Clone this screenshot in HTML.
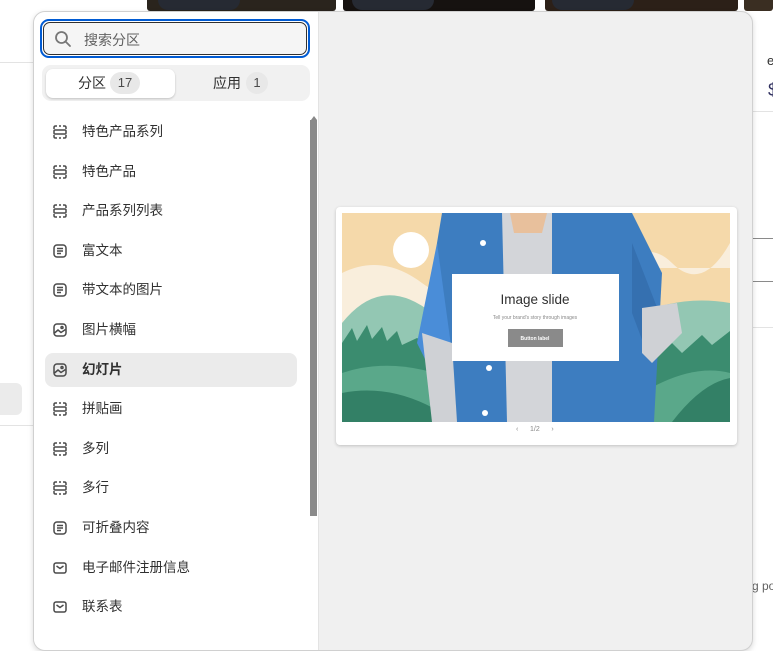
<!DOCTYPE html>
<html><head><meta charset="utf-8"><style>
*{box-sizing:border-box;margin:0;padding:0}
body{width:773px;height:630px;overflow:hidden;background:#fff;position:relative;font-family:"Liberation Sans","Noto Sans CJK SC",sans-serif;color:#303030}
.abs{position:absolute}
.tile{position:absolute;top:0;height:11px;background:#2a241d;border-radius:0 0 3px 3px}
.pill{position:absolute;top:0;height:10px;background:#262a33;border-radius:0 0 12px 12px}
.pop{position:absolute;left:33px;top:11px;width:720px;height:640px;background:#f0f0f0;border:1px solid #d0d0d0;border-radius:12px;overflow:hidden;box-shadow:0 2px 6px rgba(0,0,0,.15)}
.left{position:absolute;left:0;top:0;width:285px;height:100%;background:#fff;border-right:1px solid #e3e3e3}
.search{position:absolute;left:6px;top:7px;width:270px;height:39px;border:2px solid #005bd3;border-radius:9px;}
.search .in{position:absolute;inset:1px;border:1.5px solid #303030;border-radius:7px;background:#f5f5f5}
.search span{position:absolute;left:42px;top:9px;font-size:14px;color:#616161}
.tabs{position:absolute;left:8px;top:53px;width:268px;height:36px;background:#f1f1f1;border-radius:9px}
.tab1{position:absolute;left:4px;top:4px;width:129px;height:29px;background:#fff;border-radius:7px;box-shadow:0 1px 2px rgba(0,0,0,.2)}
.tl{position:absolute;top:8px;font-size:14px;color:#303030}
.badge{position:absolute;top:7px;height:22px;background:#e8e8e8;border-radius:11px;font-size:13px;color:#4a4a4a;text-align:center;line-height:22px}
.item{position:absolute;left:11px;width:252px;height:34px;border-radius:8px}
.item svg{position:absolute;left:8px;top:10px}
.item span{position:absolute;left:37px;top:5px;font-size:13.5px;color:#303030}
.sel{background:#ebebeb}
.sel span{font-weight:bold}
.sb{position:absolute;left:276px;top:108px;width:7px;height:396px;background:#8a8a8a}
.card{position:absolute;left:302px;top:195px;width:401px;height:238px;background:#fff;border-radius:4px;box-shadow:0 1px 3px rgba(0,0,0,.2)}
</style></head><body>
<div class="tile" style="left:147px;width:189px"></div><div class="pill" style="left:158px;width:82px"></div>
<div class="tile" style="left:343px;width:192px;background:#161210"></div><div class="pill" style="left:352px;width:82px"></div>
<div class="tile" style="left:545px;width:193px;background:#2c2018"></div><div class="pill" style="left:552px;width:82px"></div>
<div class="tile" style="left:744px;width:29px;background:#3a2e22"></div>
<div class="abs" style="left:0;top:62px;width:34px;height:1px;background:#e3e3e3"></div>
<div class="abs" style="left:0;top:383px;width:22px;height:32px;background:#ebebeb;border-radius:0 6px 6px 0"></div>
<div class="abs" style="left:0;top:425px;width:34px;height:1px;background:#e3e3e3"></div>
<div class="abs" style="left:767px;top:53px;font-size:13px">e</div>
<div class="abs" style="left:768px;top:80px;font-size:18px;color:#303060">$</div>
<div class="abs" style="left:753px;top:111px;width:20px;height:1px;background:#e3e3e3"></div>
<div class="abs" style="left:753px;top:238px;width:20px;height:1px;background:#8a8a8a"></div>
<div class="abs" style="left:753px;top:281px;width:20px;height:1px;background:#8a8a8a"></div>
<div class="abs" style="left:753px;top:327px;width:20px;height:1px;background:#e3e3e3"></div>
<div class="abs" style="left:752px;top:579px;font-size:12px;color:#616161;white-space:nowrap">g po</div>

<div class="pop">
<div class="left">
 <div class="search"><div class="in"></div>
  <svg class="abs" style="left:12px;top:9px" width="18" height="18" viewBox="0 0 18 18"><circle cx="7.5" cy="7.5" r="5.5" fill="none" stroke="#777" stroke-width="1.8"/><path d="M11.5 11.5L16 16" stroke="#777" stroke-width="1.8" stroke-linecap="round"/></svg>
  <span>搜索分区</span></div>
 <div class="tabs"><div class="tab1"></div>
  <span class="tl" style="left:36px">分区</span><div class="badge" style="left:68px;width:30px">17</div>
  <span class="tl" style="left:171px">应用</span><div class="badge" style="left:204px;width:22px">1</div>
 </div>
 <div class="sb"></div>
 <div class="abs" style="left:276px;top:104px;width:0;height:0;border-left:3px solid transparent;border-right:3px solid transparent;border-bottom:4px solid #888;margin-left:1px"></div>
 <div id="list"></div>
</div>
<div class="card">
 <svg class="abs" style="left:6px;top:6px" width="388" height="209" viewBox="0 0 388 209">
  <rect width="388" height="209" fill="#f5d9aa"/>
  <path d="M0 60 Q40 40 80 70 T160 60 L160 110 L0 110Z" fill="#f9eedc"/>
  <path d="M260 70 Q300 20 330 50 T388 30 L388 55 L260 55Z" fill="#f9eedc"/>
  <circle cx="69" cy="37" r="18" fill="#fff"/>
  <path d="M0 110 Q40 60 90 100 L140 140 L140 209 L0 209Z" fill="#93c7b3"/>
  <path d="M0 130 L10 115 L15 128 L25 112 L30 126 L40 114 L45 128 L55 118 L60 132 L75 125 L120 150 L120 209 L0 209Z" fill="#3b8c6f"/>
  <path d="M0 160 Q60 140 130 175 L130 209 L0 209Z" fill="#5aa88a"/>
  <path d="M0 180 Q50 170 100 200 L100 209 L0 209Z" fill="#338066"/>
  <path d="M280 110 Q330 80 388 90 L388 209 L280 209Z" fill="#93c7b3"/>
  <path d="M290 150 L300 140 L310 148 L330 130 L340 140 L360 122 L370 132 L388 118 L388 209 L290 209Z" fill="#3b8c6f"/>
  <path d="M300 180 Q350 150 388 160 L388 209 L300 209Z" fill="#5aa88a"/>
  <path d="M330 209 Q360 170 388 165 L388 209Z" fill="#338066"/>
  <path d="M100 0 L290 0 L320 60 L312 209 L110 209 L100 120 L95 30Z" fill="#3d7dc0"/>
  <path d="M95 30 L75 130 L90 160 L110 140Z" fill="#4a8dd8"/>
  <path d="M290 30 L325 120 L305 140 L290 100Z" fill="#3570b0"/>
  <path d="M160 0 L210 0 L210 209 L165 209Z" fill="#d3d5d9"/>
  <path d="M168 0 L205 0 L200 20 L172 20Z" fill="#e8c09c"/>
  <path d="M80 120 L110 130 L115 209 L90 209 Z" fill="#cfd1d5"/>
  <path d="M300 95 L335 90 L340 120 L310 150 L300 140Z" fill="#cfd1d5"/>
  <circle cx="141" cy="30" r="3" fill="#fff"/><circle cx="143" cy="200" r="3" fill="#fff"/><circle cx="147" cy="155" r="3" fill="#fff"/>
  <rect x="110" y="61" width="167" height="87" fill="#fff"/>
  <text x="193" y="91" text-anchor="middle" font-size="13.5" fill="#303030" font-family="Liberation Sans,sans-serif">Image slide</text>
  <text x="193" y="106" text-anchor="middle" font-size="5" fill="#888" font-family="Liberation Sans,sans-serif">Tell your brand's story through images</text>
  <rect x="166" y="116" width="55" height="18" fill="#8a8a8a"/>
  <text x="193" y="127" text-anchor="middle" font-size="5" fill="#fff" font-weight="bold" font-family="Liberation Sans,sans-serif">Button label</text>
 </svg>
 <div class="abs" style="left:180px;top:219px;font-size:7px;color:#888">‹&nbsp;&nbsp;&nbsp;&nbsp;&nbsp;&nbsp;1/2&nbsp;&nbsp;&nbsp;&nbsp;&nbsp;&nbsp;›</div>
</div>
</div>
<script>
var dash='<svg width="14" height="14" viewBox="0 0 14 14" fill="none" stroke="#4a4a4a" stroke-width="1.5"><path d="M1 4V2.5Q1 1 2.5 1H4M6 1h2M10 1h1.5Q13 1 13 2.5V4M1 10v1.5Q1 13 2.5 13H4M6 13h2M10 13h1.5Q13 13 13 11.5V10"/><rect x="1" y="5" width="12" height="4" rx="1"/></svg>';
var txt='<svg width="14" height="14" viewBox="0 0 14 14" fill="none" stroke="#4a4a4a" stroke-width="1.5"><rect x="1" y="1" width="12" height="12" rx="3"/><path d="M4 4.5h6M4 7h6M4 9.5h4"/></svg>';
var img='<svg width="14" height="14" viewBox="0 0 14 14" fill="none" stroke="#4a4a4a" stroke-width="1.5"><rect x="1" y="1" width="12" height="12" rx="3"/><path d="M1.5 10l3.5-3 3 2.5 4.5-3"/><circle cx="9" cy="4.5" r="1"/></svg>';
var mail='<svg width="14" height="14" viewBox="0 0 14 14" fill="none" stroke="#4a4a4a" stroke-width="1.5"><rect x="1" y="2" width="12" height="10" rx="2"/><path d="M3.5 5L7 7.5 10.5 5"/></svg>';
var items=[[dash,'特色产品系列'],[dash,'特色产品'],[dash,'产品系列列表'],[txt,'富文本'],[txt,'带文本的图片'],[img,'图片横幅'],[img,'幻灯片',1],[dash,'拼贴画'],[dash,'多列'],[dash,'多行'],[txt,'可折叠内容'],[mail,'电子邮件注册信息'],[mail,'联系表']];
var h='';items.forEach(function(it,i){var top=103+i*39.6;h+='<div class="item'+(it[2]?' sel':'')+'" style="top:'+top+'px">'+it[0]+'<span>'+it[1]+'</span></div>';});
document.getElementById('list').innerHTML=h;
</script>
</body></html>
